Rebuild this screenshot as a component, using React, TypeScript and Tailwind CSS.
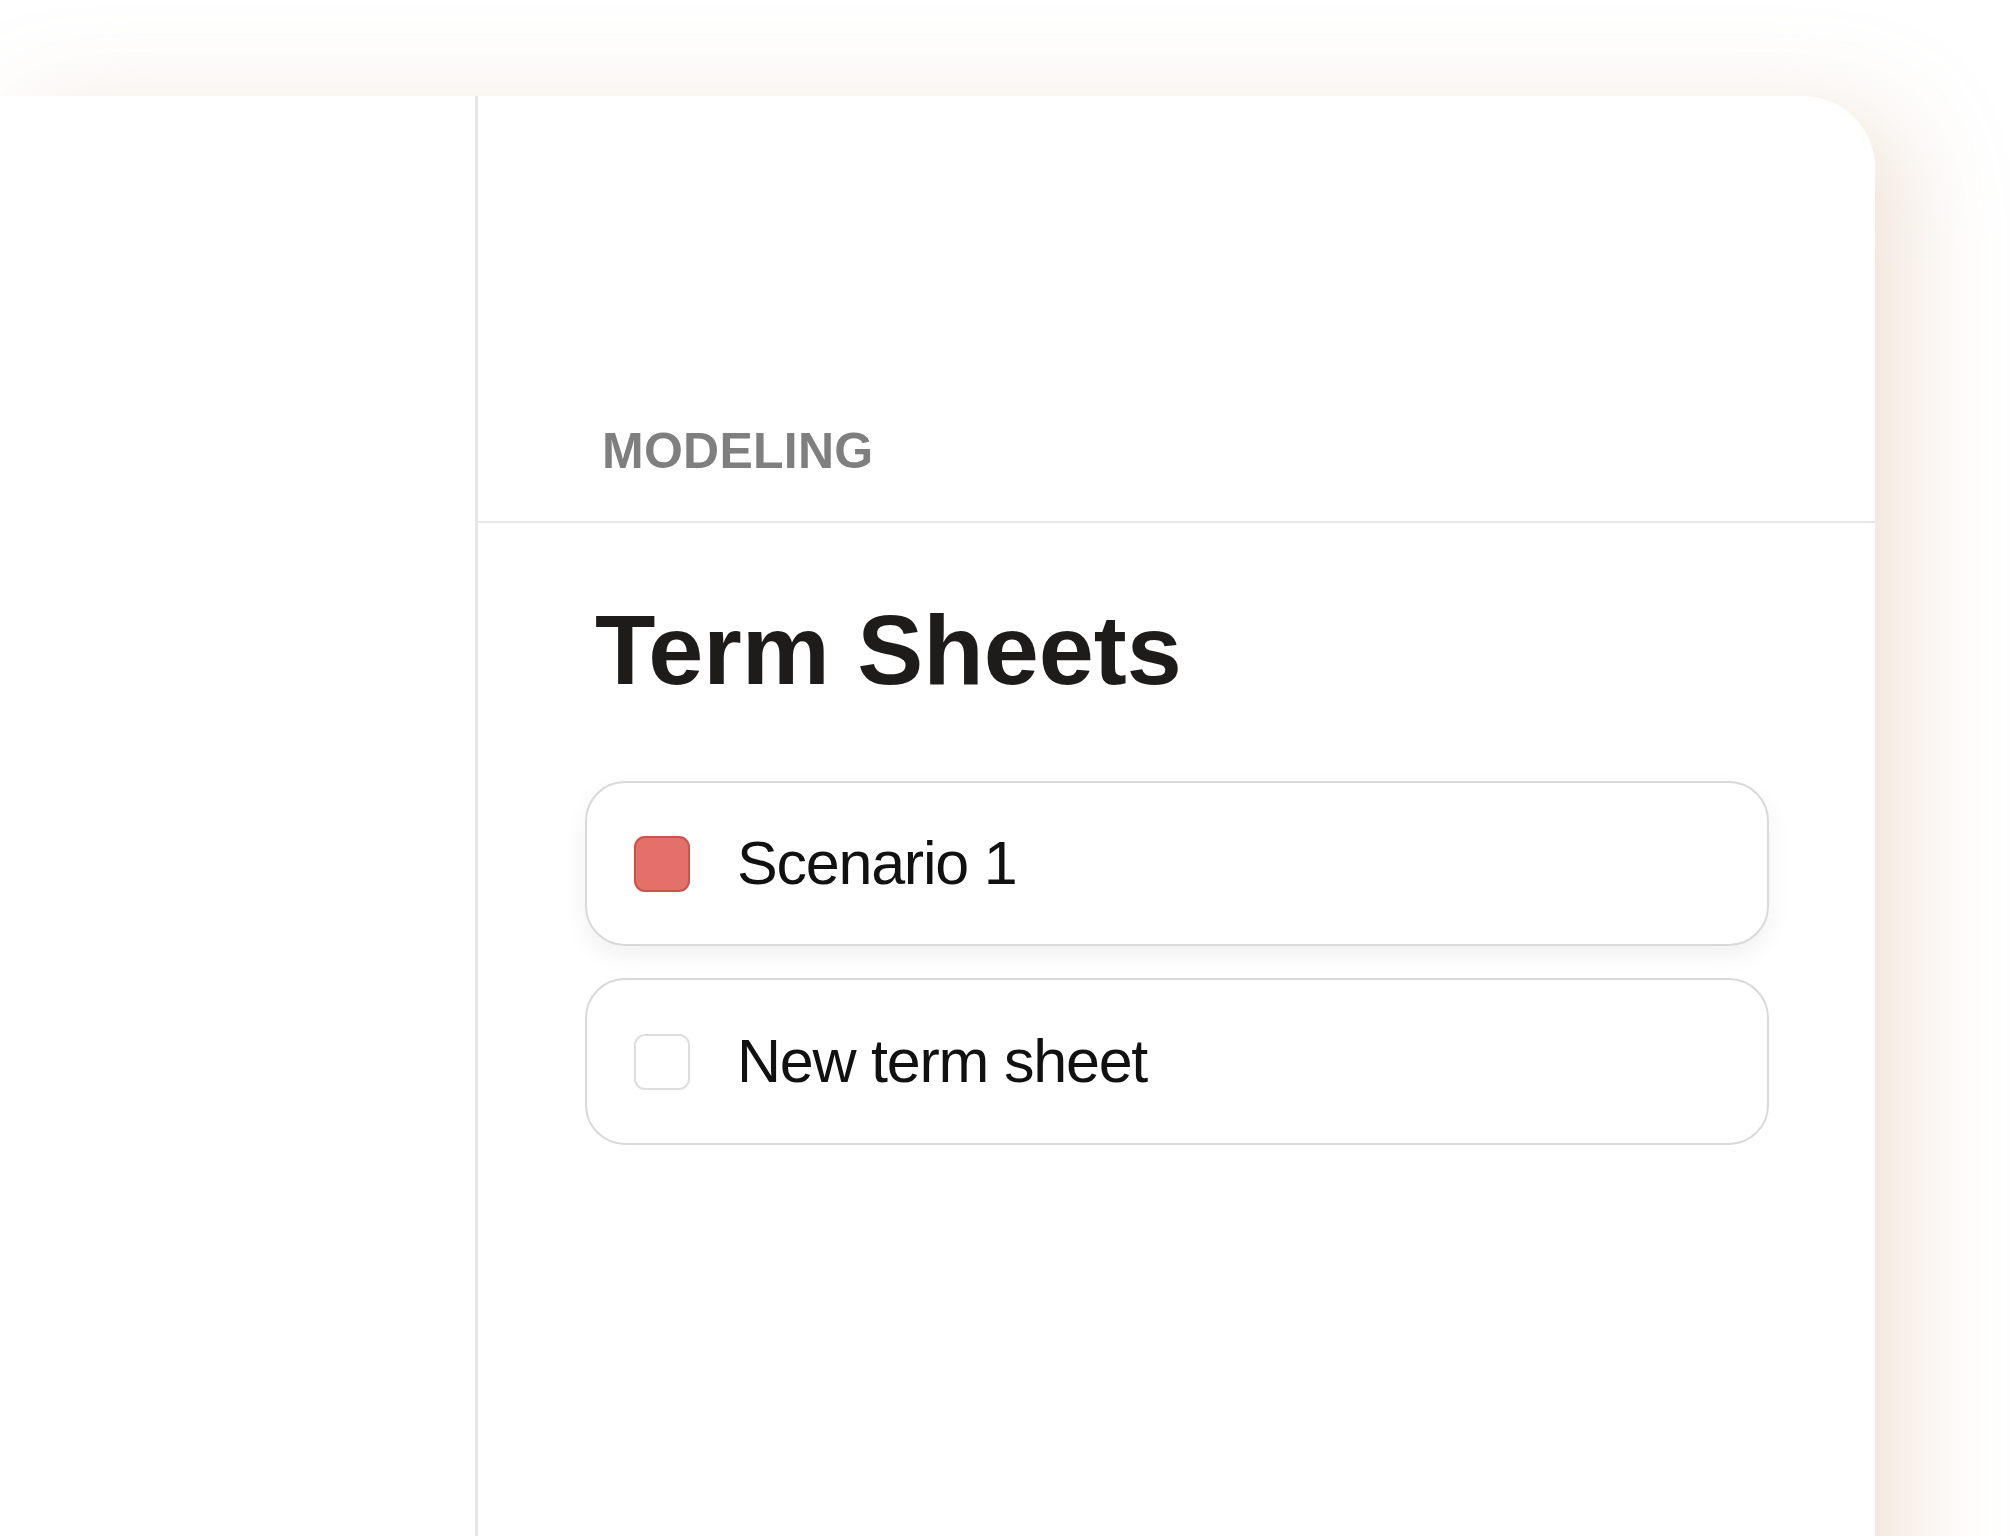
export default function App() {
  const sheets = [
    { id: 1, name: 'Scenario 1', active: true },
    { id: 2, name: 'New term sheet', active: false },
  ]

  return (
    <div className="h-[1536px] overflow-hidden bg-white pt-[96px] pr-[135px] font-['Liberation_Sans',Arial,sans-serif]">
      <div className="flex h-[1600px] rounded-tr-[72px] bg-white shadow-[30px_20px_100px_rgba(208,169,134,0.35)]">
        {/* Sidebar */}
        <aside className="w-[478px] shrink-0 border-r-[3px] border-[#e6e6e6]" />

        {/* Content */}
        <main className="flex-1">
          <header className="border-b-2 border-[#e6e6e6] pt-[330px] pb-[45px] pl-[124px]">
            <span className="block text-[50px] leading-none font-bold tracking-[0.005em] text-[#7f7f7f]">
              MODELING
            </span>
          </header>

          <section className="pt-[77px] pr-[106px] pl-[107px]">
            <h1 className="pl-[10px] text-[99px] leading-none font-bold text-[#1e1b1b]">
              Term Sheets
            </h1>

            <ul className="mt-[82px] flex flex-col gap-[32px]">
              {sheets.map((sheet) => (
                <li
                  key={sheet.id}
                  className={
                    sheet.active
                      ? 'flex h-[165px] items-center rounded-[40px] border-2 border-[#d9d9d9] bg-white pl-[47px] shadow-[0_10px_24px_rgba(0,0,0,0.06)]'
                      : 'flex h-[167px] items-center rounded-[40px] border-2 border-[#d9d9d9] bg-white pl-[47px]'
                  }
                >
                  <div
                    className={
                      sheet.active
                        ? 'h-[56px] w-[56px] shrink-0 rounded-[11px] border-2 border-[#c9544d] bg-[#e4706a]'
                        : 'h-[56px] w-[56px] shrink-0 rounded-[11px] border-2 border-[#dedede] bg-white'
                    }
                  />
                  <span className="ml-[47px] text-[61px] leading-none tracking-[-0.02em] text-[#111]">
                    {sheet.name}
                  </span>
                </li>
              ))}
            </ul>
          </section>
        </main>
      </div>
    </div>
  )
}
